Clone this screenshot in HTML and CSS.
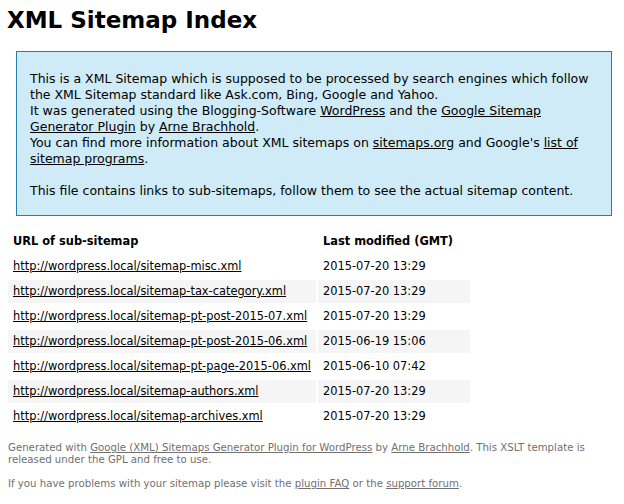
FILE: index.html
```html
<!DOCTYPE html>
<html lang="en">
<head>
  <meta charset="UTF-8" />
  <meta name="viewport" content="width=device-width, initial-scale=1.0"/>
  <title>XML Sitemap</title>
  <link rel="stylesheet" href="styles.css">
</head>
<body>

  <h1>XML Sitemap Index</h1>

  <!-- Intro box -->
  <div id="intro">
    <p>
      This is a XML Sitemap which is supposed to be processed by search engines which follow the XML Sitemap standard like Ask.com, Bing, Google and Yahoo.<br>
      It was generated using the Blogging-Software <a href="#">WordPress</a> and the <a href="#">Google Sitemap Generator Plugin</a> by <a href="#">Arne Brachhold</a>.<br>
      You can find more information about XML sitemaps on <a href="#">sitemaps.org</a> and Google's <a href="#">list of sitemap programs</a>.
    </p>
    <p>
      This file contains links to sub-sitemaps, follow them to see the actual sitemap content.
    </p>
  </div>

  <!-- Sitemap list -->
  <div id="content">
    <table>
      <tr>
        <th>URL of sub-sitemap</th>
        <th>Last modified (GMT)</th>
      </tr>
      <tr>
        <td><a href="#">http://wordpress.local/sitemap-misc.xml</a></td>
        <td>2015-07-20 13:29</td>
      </tr>
      <tr class="high">
        <td><a href="#">http://wordpress.local/sitemap-tax-category.xml</a></td>
        <td>2015-07-20 13:29</td>
      </tr>
      <tr>
        <td><a href="#">http://wordpress.local/sitemap-pt-post-2015-07.xml</a></td>
        <td>2015-07-20 13:29</td>
      </tr>
      <tr class="high">
        <td><a href="#">http://wordpress.local/sitemap-pt-post-2015-06.xml</a></td>
        <td>2015-06-19 15:06</td>
      </tr>
      <tr>
        <td><a href="#">http://wordpress.local/sitemap-pt-page-2015-06.xml</a></td>
        <td>2015-06-10 07:42</td>
      </tr>
      <tr class="high">
        <td><a href="#">http://wordpress.local/sitemap-authors.xml</a></td>
        <td>2015-07-20 13:29</td>
      </tr>
      <tr>
        <td><a href="#">http://wordpress.local/sitemap-archives.xml</a></td>
        <td>2015-07-20 13:29</td>
      </tr>
    </table>
  </div>

  <!-- Footer -->
  <div id="footer">
    <p>Generated with <a href="#">Google (XML) Sitemaps Generator Plugin for WordPress</a> by <a href="#">Arne Brachhold</a>. This XSLT template is released under the GPL and free to use.</p>
    <p>If you have problems with your sitemap please visit the <a href="#">plugin FAQ</a> or the <a href="#">support forum</a>.</p>
  </div>

</body>
</html>
```

FILE: styles.css
```css
body {
  font-family: "DejaVu Sans", Verdana, sans-serif;
  font-size: 12.5px;
  margin: 0;
  padding: 0 8px;
  color: #000;
}

a {
  color: #000;
}

h1 {
  font-size: 23px;
  line-height: 28px;
  margin: 6px 0 0 -1px;
}

#intro {
  background-color: #cfebf7;
  border: 1px solid #2580b2;
  padding: 3px 13px 0 13px;
  margin: 17px 4px 0 8px;
}

#intro p {
  line-height: 16px;
  margin: 16px 0;
}

table {
  border-spacing: 2px;
  margin: 12px 0 0 -2px;
  font-size: 11.4px;
}

th {
  text-align: left;
  padding: 4px 17px 4px 5px;
  line-height: 15px;
}

td {
  padding: 4px 5px;
  line-height: 15px;
}

tr.high td {
  background-color: #f5f5f5;
}

#footer {
  margin-top: 12px;
  font-size: 10.2px;
  color: #707070;
}

#footer p {
  line-height: 12px;
  margin: 0 0 12px 0;
}

#footer a {
  color: #707070;
}
```
